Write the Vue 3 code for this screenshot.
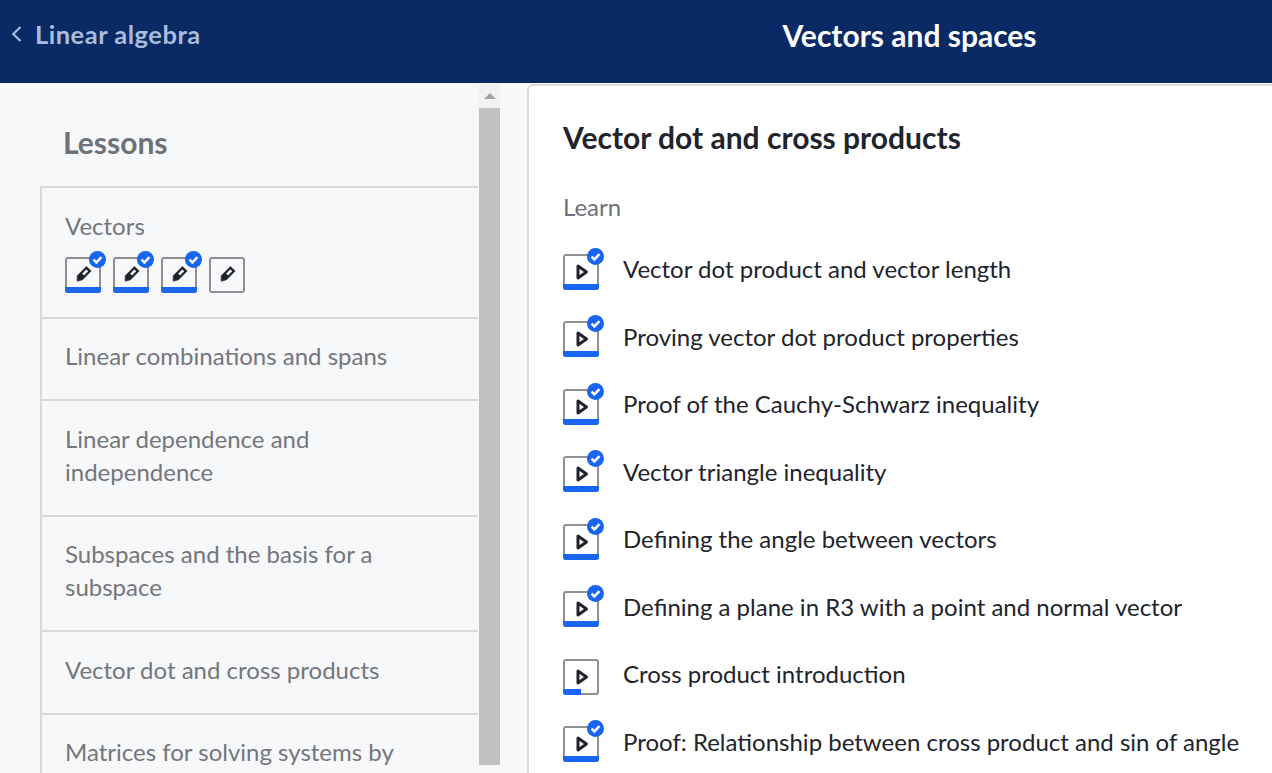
<script setup>
const lessons = [
  { title: 'Linear combinations and spans', cls: 'h82' },
  { title: 'Linear dependence and independence', cls: 'h116' },
  { title: 'Subspaces and the basis for a subspace', cls: 'h115' },
  { title: 'Vector dot and cross products', cls: 'h83' },
  { title: 'Matrices for solving systems by elimination', cls: 'h115' }
]
const skills = [true, true, true, false]
const videos = [
  { title: 'Vector dot product and vector length', done: true },
  { title: 'Proving vector dot product properties', done: true },
  { title: 'Proof of the Cauchy-Schwarz inequality', done: true },
  { title: 'Vector triangle inequality', done: true },
  { title: 'Defining the angle between vectors', done: true },
  { title: 'Defining a plane in R3 with a point and normal vector', done: true },
  { title: 'Cross product introduction', done: false },
  { title: 'Proof: Relationship between cross product and sin of angle', done: true }
]
</script>

<template>
  <div class="page">
    <header class="top">
      <div class="back">
        <svg class="chev" width="12" height="18" viewBox="0 0 12 18"><path d="M10.5 2 3.3 9l7.2 7" fill="none" stroke="#a9bcdc" stroke-width="2.2"/></svg>
        <span>Linear algebra</span>
      </div>
      <div class="unit">Vectors and spaces</div>
    </header>
    <div class="body">
      <aside class="side">
        <div class="side-scroll">
          <h2 class="lessons">Lessons</h2>
          <div class="list">
            <div class="item first">
              <div class="item-title">Vectors</div>
              <div class="skills">
                <div v-for="(s, i) in skills" :key="i" class="box" :class="{ full: s }">
                  <svg class="glyph" width="20" height="20" viewBox="0 0 20 20">
                    <path d="M13.4 1.4 18.2 6 9.6 14.8 4.2 16.2 4.2 10.8Z" fill="#21242c" stroke="#21242c" stroke-width="0.6" stroke-linejoin="round"/>
                    <path d="M13.4 4.4 15.2 6.2 11 10.4 9.2 8.6Z" fill="#f7f8fa"/>
                  </svg>
                  <span v-if="s" class="check">
                    <svg width="17" height="17" viewBox="0 0 18 18"><path d="M4.8 9.2 7.8 12.1 13.2 6.4" fill="none" stroke="#fff" stroke-width="2.6"/></svg>
                  </span>
                </div>
              </div>
            </div>
            <div v-for="l in lessons" :key="l.title" class="item" :class="l.cls">
              <div class="item-title">{{ l.title }}</div>
            </div>
          </div>
        </div>
        <div class="scrollbar">
          <div class="arrow"><span class="tri"></span></div>
          <div class="thumb"></div>
        </div>
      </aside>
      <main class="panel">
        <h1 class="heading">Vector dot and cross products</h1>
        <div class="learn">Learn</div>
        <ul class="videos">
          <li v-for="v in videos" :key="v.title" class="video">
            <div class="box vbox" :class="v.done ? 'full' : 'part'">
              <svg class="glyph" width="16" height="18" viewBox="0 0 16 18">
                <path d="M5 3 13.5 9 5 15Z" fill="none" stroke="#21242c" stroke-width="3" stroke-linejoin="round"/>
              </svg>
              <span v-if="v.done" class="check">
                <svg width="17" height="17" viewBox="0 0 18 18"><path d="M4.8 9.2 7.8 12.1 13.2 6.4" fill="none" stroke="#fff" stroke-width="2.6"/></svg>
              </span>
            </div>
            <span class="vtitle">{{ v.title }}</span>
          </li>
        </ul>
      </main>
    </div>
  </div>
</template>

<style>
html, body { margin: 0; height: 100%; overflow: hidden; background: #f7f8fa; }
</style>

<style scoped>
.page {
  width: 1272px;
  height: 773px;
  overflow: hidden;
  display: flex;
  flex-direction: column;
  font-family: Lato, "Liberation Sans", sans-serif;
  background: #f7f8fa;
}
.top {
  height: 83px;
  flex: none;
  background: #0a2a66;
  display: flex;
  position: relative;
}
.back {
  width: 547px;
  height: 68px;
  box-sizing: border-box;
  padding-left: 10px;
  display: flex;
  align-items: center;
  gap: 13px;
  color: #a9bcdc;
  font-size: 25.5px;
  letter-spacing: 0.5px;
  font-weight: 700;
}
.unit {
  flex: 1;
  height: 69px;
  display: flex;
  align-items: center;
  justify-content: center;
  color: #fff;
  font-size: 30px;
  font-weight: 700;
}
.body { flex: 1; display: flex; min-height: 0; }
.side { width: 527px; flex: none; display: flex; min-height: 0; }
.side-scroll { width: 478px; flex: none; padding-left: 40px; box-sizing: border-box; overflow: hidden; }
.lessons {
  margin: 0;
  padding: 41px 0 0 24px;
  height: 103px;
  box-sizing: border-box;
  font-size: 30px;
  line-height: 36px;
  font-weight: 700;
  color: #6f7178;
  text-indent: -1px;
}
.list { border-left: 2px solid #d6d8da; }
.item {
  border-top: 2px solid #d6d8da;
  box-sizing: border-box;
  padding: 20px 60px 0 23px;
  font-size: 24px;
  line-height: 33px;
  color: #74767c;
}
.item.first { height: 131px; padding-top: 21px; }
.h82 { height: 82px; }
.h115 { height: 115px; }
.h116 { height: 116px; padding-top: 21px; }
.h83 { height: 83px; padding-top: 21px; }
.skills { display: flex; gap: 12px; margin-top: 15px; }
.box {
  width: 36px;
  height: 36px;
  box-sizing: border-box;
  border: 2px solid #8e9096;
  border-radius: 3px;
  position: relative;
  display: flex;
  align-items: center;
  justify-content: center;
  overflow: visible;
}
.full::after, .part::after {
  content: "";
  position: absolute;
  left: -2px;
  bottom: -2px;
  height: 6px;
  background: #1865f2;
  border-radius: 0 0 3px 3px;
}
.full::after { right: -2px; }
.part::after { width: 18px; border-radius: 0 0 0 3px; }
.glyph { display: block; }
.check {
  position: absolute;
  top: -8px;
  right: -7px;
  width: 17px;
  height: 17px;
  border-radius: 50%;
  background: #1865f2;
  display: block;
}
.check svg { display: block; }
.scrollbar { width: 21px; flex: none; margin-left: 1px; display: flex; flex-direction: column; }
.arrow {
  height: 25px;
  background: #f1f1f1;
  display: flex;
  justify-content: center;
  padding-top: 10px;
  box-sizing: border-box;
}
.tri {
  width: 0;
  height: 0;
  border-left: 6px solid transparent;
  border-right: 6px solid transparent;
  border-bottom: 6px solid #a3a3a3;
}
.thumb { height: 657px; background: #c1c1c1; }
.panel {
  flex: 1;
  margin-top: 1px;
  background: #fff;
  border-top: 2px solid #dadcdf;
  border-left: 2px solid #dadcdf;
  border-top-left-radius: 6px;
  padding: 32px 0 0 34px;
  box-sizing: border-box;
  min-width: 0;
}
.heading {
  margin: 0;
  font-size: 30px;
  line-height: 38px;
  font-weight: 700;
  color: #21242c;
}
.learn {
  margin-top: 34px;
  font-size: 24px;
  line-height: 33px;
  color: #6f7178;
}
.videos { list-style: none; margin: 12px 0 0; padding: 0; }
.video {
  display: flex;
  align-items: center;
  gap: 24px;
  height: 67.5px;
  font-size: 24px;
  color: #21242c;
  white-space: nowrap;
}
.vbox { flex: none; margin-top: 6px; }
</style>
